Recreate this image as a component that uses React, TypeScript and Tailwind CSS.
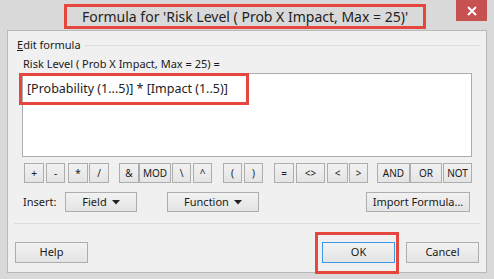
import type { ReactNode } from 'react';

const font = { fontFamily: '"Noto Sans", "Open Sans", sans-serif' };

const Btn = ({ children, className = '' }: { children: ReactNode; className?: string }) => (
  <div
    className={`flex items-center justify-center border border-[#adadad] bg-linear-to-b from-[#f2f2f2] to-[#e4e4e4] text-[#1a1a1a] ${className}`}
  >
    {children}
  </div>
);

const Caret = () => (
  <svg width="8" height="5" viewBox="0 0 8 5" className="ml-[5px] mt-[1px]">
    <path d="M0 0 L8 0 L4 4.5 Z" fill="#222" />
  </svg>
);

const ops: [string, string][] = [
  ['+', 'w-[20px]'],
  ['-', 'w-[19px] ml-[2px]'],
  ['*', 'w-[20px] ml-[3px]'],
  ['/', 'w-[20px] ml-[1px]'],
  ['&', 'w-[20px] ml-[10px]'],
  ['MOD', 'w-[32px] ml-[0px]'],
  ['\\', 'w-[19px] ml-[1px]'],
  ['^', 'w-[19px] ml-[2px]'],
  ['(', 'w-[19px] ml-[11px]'],
  [')', 'w-[19px] ml-[2px]'],
  ['=', 'w-[20px] ml-[11px]'],
  ['<>', 'w-[29px] ml-[2px]'],
  ['<', 'w-[21px] ml-[2px]'],
  ['>', 'w-[19px] ml-[1px]'],
  ['AND', 'w-[33px] ml-[9px]'],
  ['OR', 'w-[32px] ml-[0px]'],
  ['NOT', 'w-[29px] ml-[1px]'],
];

export default function App() {
  return (
    <div className="w-[494px] h-[279px] bg-[#d9d9d9] flex flex-col overflow-hidden" style={font}>
      {/* title bar */}
      <div className="h-[30px] flex items-start justify-between shrink-0">
        <div className="ml-[64px] mt-[4px] w-[362px] h-[25px] border-[3px] border-[#e5473f] flex items-center pl-[15px] text-[14px] text-[#222] whitespace-nowrap">
          Formula for 'Risk Level ( Prob X Impact, Max = 25)'
        </div>
        <div className="mr-[7px] w-[31px] h-[21px] bg-[#c75050] flex items-center justify-center">
          <svg width="10" height="10" viewBox="0 0 10 10">
            <path d="M1 1 L9 9 M9 1 L1 9" stroke="#fff" strokeWidth="2" />
          </svg>
        </div>
      </div>

      {/* panel */}
      <div className="mx-[7px] h-[243px] border border-[#b9b9b9] bg-[#f0f0f0] flex flex-col text-[11px] text-[#1a1a1a] shrink-0">
        <div className="mt-[6px] h-[16px] flex items-center pl-[9px]">
          <span className="leading-[16px]">
            <span className="underline">E</span>dit formula
          </span>
          <div className="flex-1 h-px bg-[#dcdcdc] ml-[4px] mr-[6px]" />
        </div>

        <div className="mt-[3px] h-[16px] leading-[16px] pl-[15px]">Risk Level ( Prob X Impact, Max = 25) =</div>

        <div className="mt-[1px] ml-[14px] w-[450px] h-[84px] border border-[#acacac] bg-white relative">
          <div className="pl-[4px] pt-[5px] text-[12.5px] leading-[20px] text-[#222] whitespace-nowrap">
            [Probability (1...5)] * [Impact (1..5)]
          </div>
          <div className="absolute left-[-4px] top-[-1px] w-[230px] h-[32px] border-[3px] border-[#e5473f]" />
        </div>

        <div className="mt-[6px] ml-[16px] flex h-[20px] text-[10px]">
          {ops.map(([t, c]) => (
            <Btn key={t} className={`h-[20px] ${c}`}>
              {t}
            </Btn>
          ))}
        </div>

        <div className="mt-[9px] h-[20px] flex items-center">
          <span className="ml-[15px] w-[42px]">Insert:</span>
          <Btn className="w-[72px] h-[20px] ml-[0px]">
            Field
            <Caret />
          </Btn>
          <Btn className="w-[92px] h-[20px] ml-[30px]">
            Function
            <Caret />
          </Btn>
          <Btn className="w-[104px] h-[20px] ml-[107px]">Import Formula...</Btn>
        </div>

        <div className="mt-[11px] mx-[6px] h-px bg-[#dcdcdc]" />

        <div className="mt-[18px] flex h-[21px]">
          <Btn className="ml-[7px] w-[73px] h-[21px]">Help</Btn>
          <div className="relative ml-[234px]">
            <Btn className="w-[73px] h-[21px] !border-[#3c97e6]">OK</Btn>
            <div className="absolute left-[-7px] top-[-10px] w-[84px] h-[42px] border-[3px] border-[#e5473f]" />
          </div>
          <Btn className="ml-[11px] w-[73px] h-[21px]">Cancel</Btn>
        </div>
      </div>
    </div>
  );
}
